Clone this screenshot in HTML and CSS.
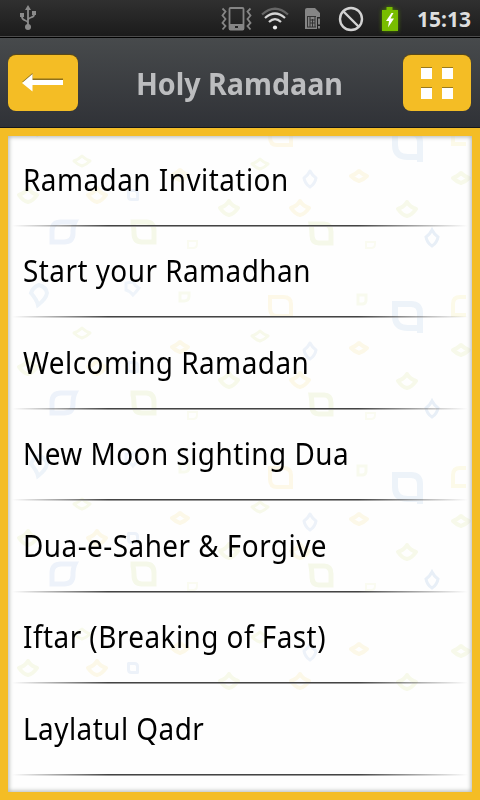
FILE: index.html
```html
<!DOCTYPE html>
<html lang="en">
<head>
    <meta charset="UTF-8">
    <meta name="viewport" content="width=device-width, initial-scale=1.0">
    <title>Holy Ramdaan</title>
    <link rel="stylesheet" href="styles.css">
</head>
<body>
    <div class="status-bar">
        <svg class="usb" width="18" height="26" viewBox="0 0 18 26" fill="none" stroke="#8b8b8b" stroke-width="1.8">
            <path d="M9 4v18M9 18C9 15 3 16 3 12V9M9 15c0-3 6-2 6-5V8"/>
            <path d="M9 0l3 5H6zM1 8h4v4H1zM13 6h4v4h-4z" fill="#8b8b8b" stroke="none"/>
            <circle cx="9" cy="22" r="3" fill="#8b8b8b" stroke="none"/>
        </svg>
        <div class="status-icons">
            <svg width="32" height="24" viewBox="0 0 32 24" fill="none" stroke="#858585">
                <path d="M1.500 1.500l3 3-3 4 3 3.500-3 4 3 3-3 3.500M29.500 1.500l-3 3 3 4-3 3.500 3 4-3 3 3 3.500" stroke-width="1.8"/>
                <rect x="8.500" y="1" width="14" height="21.500" rx="1" stroke-width="1.800"/>
                <path d="M8 17h15v6H8z" fill="#858585" stroke="none"/>
                <path d="M13.500 18.500h4v3h-4z" fill="#222"/>
            </svg>
            <svg width="28" height="24" viewBox="0 0 28 24" fill="none" stroke-width="2.200">
                <path d="M1 7.500Q14-4 27 7.500" stroke="#666"/>
                <path d="M4 11Q14 2 24 11M8 15Q14 9 20 15" stroke="#d6d6d6"/>
                <circle cx="14" cy="20.500" r="2.100" fill="#eee"/>
            </svg>
            <svg width="16" height="22" viewBox="0 0 16 22">
                <path d="M0 2q0-2 2-2h8l5 5v4h-3v12H0z" fill="#858585"/>
                <path d="M2 8.500h9M2.500 9v10M5 9v10M7.500 11v8M10 9v10M2 19h9M5 12h5M5 15h5" stroke="#333" fill="none"/>
                <path d="M14 10.500v6M14 18v2.500" stroke="#999" stroke-width="1.600"/>
            </svg>
            <svg width="26" height="26" viewBox="0 0 26 26" fill="none" stroke="#d2d2d2" stroke-width="2.400">
                <circle cx="13" cy="13" r="11"/>
                <path d="M5.500 5.500l15 15"/>
            </svg>
            <svg class="battery" width="18" height="24" viewBox="0 0 18 24">
                <path d="M5.500 0h6v3H17v21H1V3h4.500z" fill="#78bd00"/>
                <path d="M10.500 6L5 14h3l-1 6.500 6-9H9.500l3-5.500z" fill="#fff"/>
            </svg>
        </div>
        <span class="time">15:13</span>
    </div>

    <div class="header">
        <button class="btn btn-back" aria-label="Back">
            <svg width="42" height="20" viewBox="0 0 42 20">
                <path d="M0 9L10.500 0v5.500H41V8H10z" fill="#8d711d"/>
                <path d="M0 10L10.500 1v6H41v5H10.500v6.500z" fill="#fff"/>
            </svg>
        </button>
        <h1>Holy Ramdaan</h1>
        <button class="btn btn-menu" aria-label="Menu">
            <span></span><span></span><span></span><span></span>
        </button>
    </div>

    <div class="content">
        <div class="panel">
            <svg class="pattern" width="464" height="656" viewBox="8 136 464 656" fill="none" stroke-width="4">
                <defs>
                    <path id="diamond" d="M-9 0Q-3-2 0-7 3-2 9 0 5 6 0 7-5 6-9 0z"/>
                    <path id="diamond-small" d="M-8 0Q-3-2 0-5 3-2 8 0 4 4 0 5-4 4-8 0z"/>
                    <path id="drop" d="M0-8Q2-4 6-1 5 5 0 8-5 5-6-1-2-4 0-8z"/>
                    <!-- small diamonds -->
                    <g id="diamonds" stroke-linejoin="round">
                        <g stroke="#f7f9ea">
                            <use href="#diamond-small" x="82" y="161" stroke-width="3"/>
                            <use href="#diamond" x="28" y="195"/>
                            <use href="#diamond" x="229" y="208"/>
                            <use href="#diamond" x="407" y="209"/>
                            <use href="#diamond-small" x="461" y="178"/>
                            <use href="#diamond-small" x="260" y="164" stroke-width="3"/>
                        </g>
                        <g stroke="#fcf8e8">
                            <use href="#diamond" x="97" y="195"/>
                            <use href="#diamond-small" x="180" y="175"/>
                            <use href="#diamond-small" x="359" y="176"/>
                            <use href="#diamond" x="300" y="208"/>
                        </g>
                        <g stroke="#edf2f9" stroke-width="3">
                            <use href="#drop" x="310" y="179"/>
                            <path d="M128.500 190.500h6q3 0 3 3v6h-6q-3 0-3-3z"/>
                        </g>
                    </g>
                    <!-- row with the larger leaves -->
                    <g id="leaves">
                        <path d="M75 222H61q-9 0-9 9v11h12q9 0 9-9 0-7 2-11z" stroke="#edf2fa" stroke-width="5"/>
                        <path d="M133 222h13q8 0 8 9v11h-12q-8 0-8-9 0-5-1-9z" stroke="#f5f8e9" stroke-width="5"/>
                        <path d="M311 224h13q7 0 7 8v11h-12q-7 0-7-8 0-5-1-11z" stroke="#f5f8e9" stroke-width="5"/>
                        <use href="#drop" x="432" y="238" stroke="#e8eff7" stroke-width="3"/>
                        <path d="M188 241h9v3q0 4-4 4h-5zM366 242h9v2q0 4-4 4h-5z" stroke="#fafbf1" stroke-width="2"/>
                    </g>
                    <g id="lower">
                        <path d="M31 293q2-6 8-8 7 2 8 8-1 6-9 12-1-5-7-12z" stroke="#edf3f9"/>
                        <path d="M133 282q2 4 6 6-3 4-6 7-3-4-7-5v-7z" stroke="#eff4fa" stroke-width="3"/>
                        <path d="M180 293h9v3q0 5-5 5h-4zM358 295h8v5q0 4-4 4h-4z" stroke="#f8faee" stroke-width="3"/>
                        <path d="M270 297h13q8 0 8 7v12h-14q-7 0-7-8z" stroke="#fdf8e8" stroke-width="4"/>
                        <path d="M466 297h-6q-7 0-7 7v11h13" stroke="#fcfae9" stroke-width="4"/>
                        <path d="M392 304h19q9 0 9 9v20M395 304v12q0 12 13 12h14" stroke="#edf3f9" stroke-width="6"/>
                    </g>
                </defs>
                <use href="#lower" y="-171"/>
                <use href="#diamonds"/>
                <use href="#leaves"/>
                <use href="#lower"/>
                <use href="#diamonds" y="172"/>
                <use href="#leaves" y="171"/>
                <use href="#lower" y="171"/>
                <use href="#diamonds" y="343"/>
                <use href="#leaves" y="342"/>
                <use href="#diamonds" y="473"/>
            </svg>
            <ul class="list">
                <li><span>Ramadan Invitation</span></li>
                <li><span>Start your Ramadhan</span></li>
                <li><span>Welcoming Ramadan</span></li>
                <li><span>New Moon sighting Dua</span></li>
                <li><span>Dua-e-Saher &amp; Forgive</span></li>
                <li><span>Iftar (Breaking of Fast)</span></li>
                <li><span>Laylatul Qadr</span></li>
            </ul>
        </div>
    </div>
</body>
</html>
```

FILE: styles.css
```css
* {
    box-sizing: border-box;
}
body {
    margin: 0;
    width: 480px;
    height: 800px;
    display: flex;
    flex-direction: column;
    overflow: hidden;
    background: #f4bd25;
    font-family: "Noto Sans", "Open Sans", sans-serif;
}
.status-bar {
    height: 38px;
    flex: none;
    display: flex;
    align-items: center;
    padding: 0 9px 2px 19px;
    background: linear-gradient(#303030, #1b1b1b 36px, #4b4b4b 36px, #4b4b4b 37px, #000 37px);
}
.status-icons {
    display: flex;
    align-items: center;
    margin-left: auto;
    padding-top: 1px;
}
.status-icons svg {
    margin-right: 8px;
}
.status-icons svg:nth-child(2) {
    margin-right: 16px;
}
.status-icons svg:nth-child(3) {
    margin-right: 17px;
}
.status-icons svg:nth-child(4) {
    margin-right: 17px;
}
.status-icons .battery {
    margin-right: 18px;
    filter: drop-shadow(0 0 2px #4c7d00);
}
.time {
    width: 54px;
    font-size: 21px;
    font-weight: bold;
    line-height: 36px;
    color: #dedede;
    white-space: nowrap;
    padding-top: 2px;
}
.header {
    height: 90px;
    flex: none;
    display: flex;
    align-items: center;
    justify-content: space-between;
    padding: 0 9px 0 8px;
    background: linear-gradient(#474a4c, #303237);
    border-bottom: 1px solid #161719;
}
.header h1 {
    margin: 0 2px 0 0;
    font-size: 30px;
    font-weight: bold;
    line-height: 40px;
    color: #bcbdbf;
    white-space: nowrap;
    transform: scaleX(0.955);
    padding-top: 3px;
}
.btn {
    display: flex;
    align-items: center;
    justify-content: center;
    width: 70px;
    height: 56px;
    padding: 1px 0 0;
    border: none;
    border-radius: 8px;
    background: #f4bd25;
    box-shadow: 0 -1px 1px #5e4a12;
    cursor: pointer;
}
.btn-menu {
    width: 68px;
    display: grid;
    grid-template-columns: 11px 11px;
    gap: 9px 10px;
    place-content: center;
}
.btn-menu span {
    height: 11px;
    background: #fff;
    box-shadow: 0 -1px #9a7a1d;
}
.content {
    flex: 1;
    padding: 8px;
}
.panel {
    position: relative;
    height: 656px;
    overflow: hidden;
    background: #fefefe;
}
/* soft inner edge over the pattern and the rows */
.panel::after {
    content: "";
    position: absolute;
    inset: 0;
    box-shadow: inset 0 0 4px 1px #b0b5b1;
    pointer-events: none;
}
.pattern {
    position: absolute;
    top: 0;
    left: 0;
}
.list {
    position: relative;
    list-style: none;
    margin: -1px 0 0;
    padding: 0;
}
.list li {
    height: 91.5px;
    padding: 23.5px 15px 0;
    font-size: 30px;
    line-height: 42px;
    color: #000;
    background:
        linear-gradient(to right, transparent 4px, #444 100px, #444 350px, transparent 460px) left bottom 1px / 100% 1px no-repeat,
        linear-gradient(to right, transparent 4px, #999 100px, #999 350px, transparent 460px) left bottom / 100% 1px no-repeat;
}
.list span {
    display: inline-block;
    white-space: nowrap;
    letter-spacing: 0.5px;
    transform: scaleX(0.93);
    transform-origin: left;
}
```
